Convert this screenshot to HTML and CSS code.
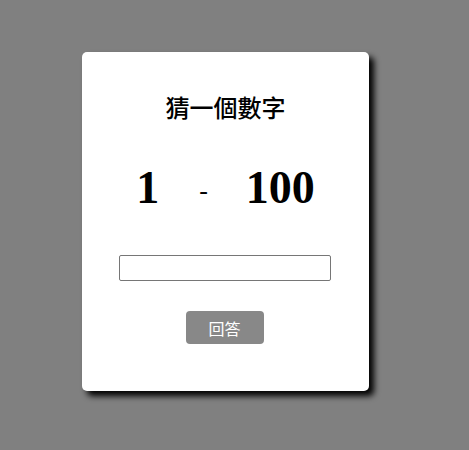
FILE: index.html
```html
<!DOCTYPE html>
<html lang="zh-Hant">
<head>
<meta charset="utf-8">
<title>猜一個數字</title>
<link rel="stylesheet" href="styles.css">
</head>
<body>
<div class="page">
  <div class="card">
    <h2 class="title">猜一個數字</h2>
    <div class="range"><span class="num">1</span><span class="dash">-</span><span class="num">100</span></div>
    <input class="guess" type="text">
    <button class="answer" type="button">回答</button>
  </div>
</div>
</body>
</html>
```
FILE: styles.css
```css
html, body {
  margin: 0;
  padding: 0;
  background: #808080;
  height: 100%;
}
.page {
  padding: 52px 0 0 82px;
}
.card {
  width: 287px;
  height: 339px;
  box-sizing: border-box;
  background: #fff;
  border-radius: 5px;
  box-shadow: 5px 5px 6px #000;
  display: flex;
  flex-direction: column;
  align-items: center;
  padding-top: 38px;
}
.title {
  margin: 0;
  font-family: "Noto Sans CJK TC", "Noto Sans", sans-serif;
  font-size: 24px;
  font-weight: 500;
  line-height: 34px;
  color: #000;
}
.range {
  margin-top: 36px;
  text-align: center;
  font-family: "Liberation Serif", serif;
  font-weight: 700;
  font-size: 46px;
  line-height: 56px;
  color: #000;
  white-space: nowrap;
}
.dash {
  font-size: 26px;
  font-weight: 400;
  vertical-align: 4px;
  margin: 0 38px 0 40px;
}
.guess {
  margin-top: 36px;
  margin-right: 2px;
  width: 212px;
  height: 26px;
  box-sizing: border-box;
  border: 1px solid #767676;
  border-radius: 2px;
  padding: 0 4px;
}
.answer {
  margin-top: 30px;
  margin-right: 2px;
  width: 78px;
  height: 33px;
  border: none;
  border-radius: 4px;
  background: #888;
  color: #fff;
  font-family: "Noto Sans CJK TC", sans-serif;
  font-size: 16px;
  padding: 0;
}
```
